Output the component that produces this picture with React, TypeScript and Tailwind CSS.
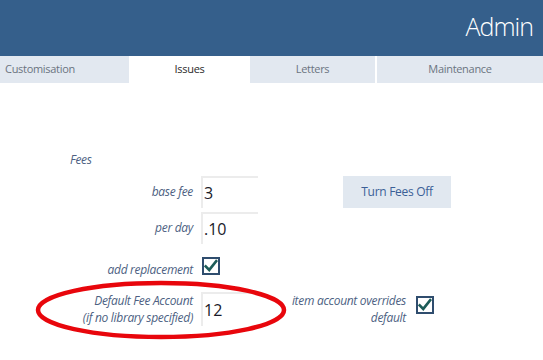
import React from "react";

function Check() {
  return (
    <div className="w-[18px] h-[18px] border-2 border-[#2f4d6e] bg-white flex items-center justify-center">
      <svg width="16" height="14" viewBox="0 0 16 14">
        <path d="M2 7.5 L6 11.5 L14 1.5" fill="none" stroke="#1d5c58" strokeWidth="3" strokeLinecap="square" />
      </svg>
    </div>
  );
}

function Input({ value }: { value: string }) {
  return (
    <div className="w-[57px] h-full border-t-2 border-l-2 border-[#ececec] pl-[1px] flex items-center text-[16px] text-[#1a1a2a]">
      {value}
    </div>
  );
}

const label = "italic text-[12px] tracking-[-0.3px] text-[#4d5f82]";

export default function App() {
  const font = { fontFamily: '"Open Sans", "Noto Sans", sans-serif' };
  return (
    <div className="relative w-[543px] h-[360px] bg-white overflow-hidden" style={font}>
      <div className="h-[56px] bg-[#355f8b] flex items-center justify-end pr-[10px]">
        <span className="text-white text-[25px] font-light tracking-[-1px] leading-none mt-[-4px]">Admin</span>
      </div>
      <div className="flex h-[27px] text-[11px] tracking-[-0.3px]">
        <div className="w-[129px] bg-[#e2e8f0] text-[#6b7480] flex items-center pl-[5px]">Customisation</div>
        <div className="w-[121px] bg-white text-[#2a2a2a] flex items-center justify-center">Issues</div>
        <div className="w-[125px] bg-[#e2e8f0] text-[#6b7480] flex items-center justify-center">Letters</div>
        <div className="w-[2px] bg-white" />
        <div className="flex-1 bg-[#e2e8f0] text-[#6b7480] flex items-center justify-center">Maintenance</div>
      </div>

      <div className={`${label} mt-[68px] pl-[70px] leading-[18px]`}>Fees</div>

      <div className="flex mt-[7px] h-[32px]">
        <div className={`w-[193px] text-right ${label} flex items-center justify-end`}>base fee</div>
        <div className="w-[8px]" />
        <Input value="3" />
        <div className="ml-[85px] w-[108px] h-[32px] bg-[#e1e8f0] text-[#3b5f97] text-[12px] tracking-[-0.3px] flex items-center justify-center">Turn Fees Off</div>
      </div>

      <div className="flex mt-[4px] h-[32px]">
        <div className={`w-[193px] text-right ${label} flex items-center justify-end`}>per day</div>
        <div className="w-[8px]" />
        <Input value=".10" />
      </div>

      <div className="flex mt-[13px] h-[18px] items-center">
        <div className={`w-[193px] text-right ${label} mt-[8px]`}>add replacement</div>
        <div className="w-[9px]" />
        <Check />
      </div>

      <div className="flex mt-[17px] h-[34px]">
        <div className={`w-[193px] text-right ${label} leading-[17px] flex flex-col justify-center`}>
          <span>Default Fee Account</span>
          <span>(if no library specified)</span>
        </div>
        <div className="w-[8px]" />
        <Input value="12" />
        <div className={`w-[148px] text-right ${label} leading-[17px] flex flex-col justify-center`}>
          <span>item account overrides</span>
          <span>default</span>
        </div>
        <div className="ml-[10px] mt-[4px]">
          <Check />
        </div>
      </div>

      <svg className="absolute left-0 top-0 pointer-events-none" width="543" height="360">
        <ellipse cx="161" cy="310" rx="123" ry="27" fill="none" stroke="#e8060c" strokeWidth="4.5" />
      </svg>
    </div>
  );
}
